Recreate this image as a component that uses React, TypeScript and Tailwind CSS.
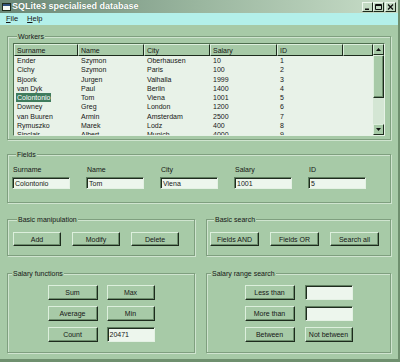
import type { ReactNode } from "react";

type Worker = {
  surname: string;
  name: string;
  city: string;
  salary: string;
  id: string;
};

const WORKERS: Worker[] = [
  { surname: "Ender", name: "Szymon", city: "Oberhausen", salary: "10", id: "1" },
  { surname: "Cichy", name: "Szymon", city: "Paris", salary: "100", id: "2" },
  { surname: "Bjoork", name: "Jurgen", city: "Valhalla", salary: "1999", id: "3" },
  { surname: "van Dyk", name: "Paul", city: "Berlin", salary: "1400", id: "4" },
  { surname: "Colontonio", name: "Tom", city: "Viena", salary: "1001", id: "5" },
  { surname: "Downey", name: "Greg", city: "London", salary: "1200", id: "6" },
  { surname: "van Buuren", name: "Armin", city: "Amsterdam", salary: "2500", id: "7" },
  { surname: "Rymuszko", name: "Marek", city: "Lodz", salary: "400", id: "8" },
  { surname: "Sinclair", name: "Albert", city: "Munich", salary: "4000", id: "9" },
];

const SELECTED_ID = "5";

const COLUMNS: { key: keyof Worker; label: string; width: string }[] = [
  { key: "surname", label: "Surname", width: "w-[64px]" },
  { key: "name", label: "Name", width: "w-[66px]" },
  { key: "city", label: "City", width: "w-[66px]" },
  { key: "salary", label: "Salary", width: "w-[67px]" },
  { key: "id", label: "ID", width: "w-[66px]" },
];

const FIELDS = [
  { label: "Surname", value: "Colontonio" },
  { label: "Name", value: "Tom" },
  { label: "City", value: "Viena" },
  { label: "Salary", value: "1001" },
  { label: "ID", value: "5" },
];

function GroupBox({ title, className, children }: { title: string; className?: string; children: ReactNode }) {
  return (
    <div
      className={`border border-[#7f9f7f] shadow-[inset_1px_1px_0_#cfe4cf,1px_1px_0_#cfe4cf] ${className ?? ""}`}
    >
      <div className="-mt-[5px] ml-[4px] h-[9px] w-fit bg-[#a7caa7] px-[1px] leading-[9px]">{title}</div>
      {children}
    </div>
  );
}

function Button({ label, className }: { label: string; className?: string }) {
  return (
    <button
      type="button"
      className={`flex items-center justify-center border border-t-[#dcefdc] border-l-[#dcefdc] border-r-[#1d2b1d] border-b-[#1d2b1d] bg-[#a7caa7] leading-none text-[#161616] shadow-[inset_-1px_-1px_0_#6d8e6d] ${className ?? ""}`}
    >
      {label}
    </button>
  );
}

function TextBox({ value, className }: { value?: string; className?: string }) {
  return (
    <div
      className={`flex items-center border border-t-[#607f60] border-l-[#607f60] border-r-[#e4f1e4] border-b-[#e4f1e4] bg-[#edf6ed] pl-[2px] leading-none shadow-[inset_1px_1px_0_#1f2c1f] ${className ?? ""}`}
    >
      {value}
    </div>
  );
}

function ScrollArrow({ up }: { up: boolean }) {
  return (
    <div className="flex h-[11px] items-center justify-center border border-t-[#dcefdc] border-l-[#dcefdc] border-r-[#1d2b1d] border-b-[#1d2b1d] bg-[#a7caa7]">
      <svg width="5" height="3" viewBox="0 0 5 3">
        <path d={up ? "M2.5 0 L5 3 L0 3 Z" : "M0 0 L5 0 L2.5 3 Z"} fill="#111" />
      </svg>
    </div>
  );
}

function CaptionButton({ kind }: { kind: "min" | "max" | "close" }) {
  return (
    <div className="flex h-[10px] w-[11px] items-center justify-center border border-t-[#eef7ee] border-l-[#eef7ee] border-r-[#1d2b1d] border-b-[#1d2b1d] bg-[#c3dac3]">
      <svg width="7" height="6" viewBox="0 0 7 6">
        {kind === "min" && <rect x="1" y="4.5" width="4" height="1.5" fill="#111" />}
        {kind === "max" && <path d="M0.5 0.5 H6.5 V5.5 H0.5 Z M0.5 1.5 H6.5" stroke="#111" fill="none" strokeWidth="1" />}
        {kind === "close" && <path d="M1 0.5 L6 5.5 M6 0.5 L1 5.5" stroke="#111" strokeWidth="1.3" />}
      </svg>
    </div>
  );
}

export default function App() {
  return (
    <div
      className="flex h-[362px] w-[400px] flex-col overflow-hidden border-r-[2px] border-b-[3px] border-r-[#6f906f] border-b-[#6f906f] bg-[#a7caa7] text-[7px] text-[#161616]"
      style={{ fontFamily: '"Liberation Sans", Arial, sans-serif' }}
    >
      {/* title bar */}
      <div className="flex h-[13px] items-center bg-gradient-to-r from-[#6a8776] via-[#9ab69f] to-[#c9dec9] pl-[2px] pr-[2px]">
        <svg width="9" height="8" viewBox="0 0 9 8" className="mr-[1px]">
          <rect x="0.5" y="0.5" width="8" height="7" fill="#f4f8f4" stroke="#1d2b1d" />
          <rect x="1" y="1" width="7" height="2" fill="#2f4f7f" />
        </svg>
        <span className="text-[9px] font-bold leading-none text-white [text-shadow:0_0_1px_#4a6a55]">
          SQLite3 specialised database
        </span>
        <div className="ml-auto flex items-center">
          <CaptionButton kind="min" />
          <CaptionButton kind="max" />
          <div className="w-[1px]" />
          <CaptionButton kind="close" />
        </div>
      </div>

      {/* menu */}
      <div className="flex h-[12px] items-center gap-[9px] bg-[#b3f0ea] pl-[6px] text-[7.5px] leading-none">
        <span>
          <span className="underline">F</span>ile
        </span>
        <span>
          <span className="underline">H</span>elp
        </span>
      </div>

      <div className="flex flex-col px-[7px]">
        {/* workers */}
        <GroupBox title="Workers" className="mt-[11px] h-[104px] px-[5px]">
          <div className="mt-[2px] flex h-[93px] border border-t-[#4f6f4f] border-l-[#4f6f4f] border-r-[#e6f2e6] border-b-[#e6f2e6] bg-[#e8f2e8]">
            <div className="flex-1 overflow-hidden">
              <div className="flex h-[12px]">
                {COLUMNS.map((col) => (
                  <div
                    key={col.key}
                    className={`${col.width} flex items-center border border-t-[#dcefdc] border-l-[#dcefdc] border-r-[#1d2b1d] border-b-[#1d2b1d] bg-[#a7caa7] pl-[2px] leading-none`}
                  >
                    {col.label}
                  </div>
                ))}
                <div className="flex-1 border border-t-[#dcefdc] border-l-[#dcefdc] border-r-[#1d2b1d] border-b-[#1d2b1d] bg-[#a7caa7]" />
              </div>
              {WORKERS.map((w) => (
                <div key={w.id} className="flex h-[9.25px] items-center leading-none">
                  {COLUMNS.map((col) => (
                    <div key={col.key} className={`${col.width} pl-[2px]`}>
                      {col.key === "surname" && w.id === SELECTED_ID ? (
                        <span className="bg-[#3f7c5d] px-[1px] py-[1px] text-white">{w[col.key]}</span>
                      ) : (
                        <span className="pl-[1px]">{w[col.key]}</span>
                      )}
                    </div>
                  ))}
                </div>
              ))}
            </div>
            <div className="flex w-[11px] flex-col bg-[#d4e6d4]">
              <ScrollArrow up />
              <div className="h-[43px] border border-t-[#dcefdc] border-l-[#dcefdc] border-r-[#1d2b1d] border-b-[#1d2b1d] bg-[#a7caa7] shadow-[inset_-1px_-1px_0_#6d8e6d]" />
              <div className="flex-1" />
              <ScrollArrow up={false} />
            </div>
          </div>
        </GroupBox>

        {/* fields */}
        <GroupBox title="Fields" className="mt-[14px] h-[49px] pl-[4px]">
          <div className="mt-[7px] flex gap-[16px]">
            {FIELDS.map((f) => (
              <div key={f.label} className="flex w-[58px] flex-col">
                <div className="pl-[1px] leading-[8px]">{f.label}</div>
                <TextBox value={f.value} className="mt-[3px] h-[12px]" />
              </div>
            ))}
          </div>
        </GroupBox>

        {/* basic */}
        <div className="mt-[16px] flex gap-[11px]">
          <GroupBox title="Basic manipulation" className="h-[37px] w-[188px] pl-[5px]">
            <div className="mt-[8px] flex gap-[11px]">
              <Button label="Add" className="h-[14px] w-[48px]" />
              <Button label="Modify" className="h-[14px] w-[48px]" />
              <Button label="Delete" className="h-[14px] w-[48px]" />
            </div>
          </GroupBox>
          <GroupBox title="Basic search" className="h-[37px] flex-1 pl-[3px]">
            <div className="mt-[8px] flex gap-[11px]">
              <Button label="Fields AND" className="h-[14px] w-[49px]" />
              <Button label="Fields OR" className="h-[14px] w-[49px]" />
              <Button label="Search all" className="h-[14px] w-[49px]" />
            </div>
          </GroupBox>
        </div>

        {/* salary */}
        <div className="mt-[17px] flex gap-[11px]">
          <GroupBox title="Salary functions" className="h-[80px] w-[188px]">
            <div className="mt-[7px] grid grid-cols-[50px_48px] justify-center gap-x-[9px] gap-y-[6px]">
              <Button label="Sum" className="h-[15px]" />
              <Button label="Max" className="h-[15px]" />
              <Button label="Average" className="h-[15px]" />
              <Button label="Min" className="h-[15px]" />
              <Button label="Count" className="h-[15px]" />
              <TextBox value="20471" className="h-[15px]" />
            </div>
          </GroupBox>
          <GroupBox title="Salary range search" className="h-[80px] flex-1">
            <div className="mt-[7px] grid grid-cols-[50px_48px] justify-center gap-x-[10px] gap-y-[6px]">
              <Button label="Less than" className="h-[15px]" />
              <TextBox className="h-[15px]" />
              <Button label="More than" className="h-[15px]" />
              <TextBox className="h-[15px]" />
              <Button label="Between" className="h-[15px]" />
              <Button label="Not between" className="h-[15px]" />
            </div>
          </GroupBox>
        </div>
      </div>
    </div>
  );
}
